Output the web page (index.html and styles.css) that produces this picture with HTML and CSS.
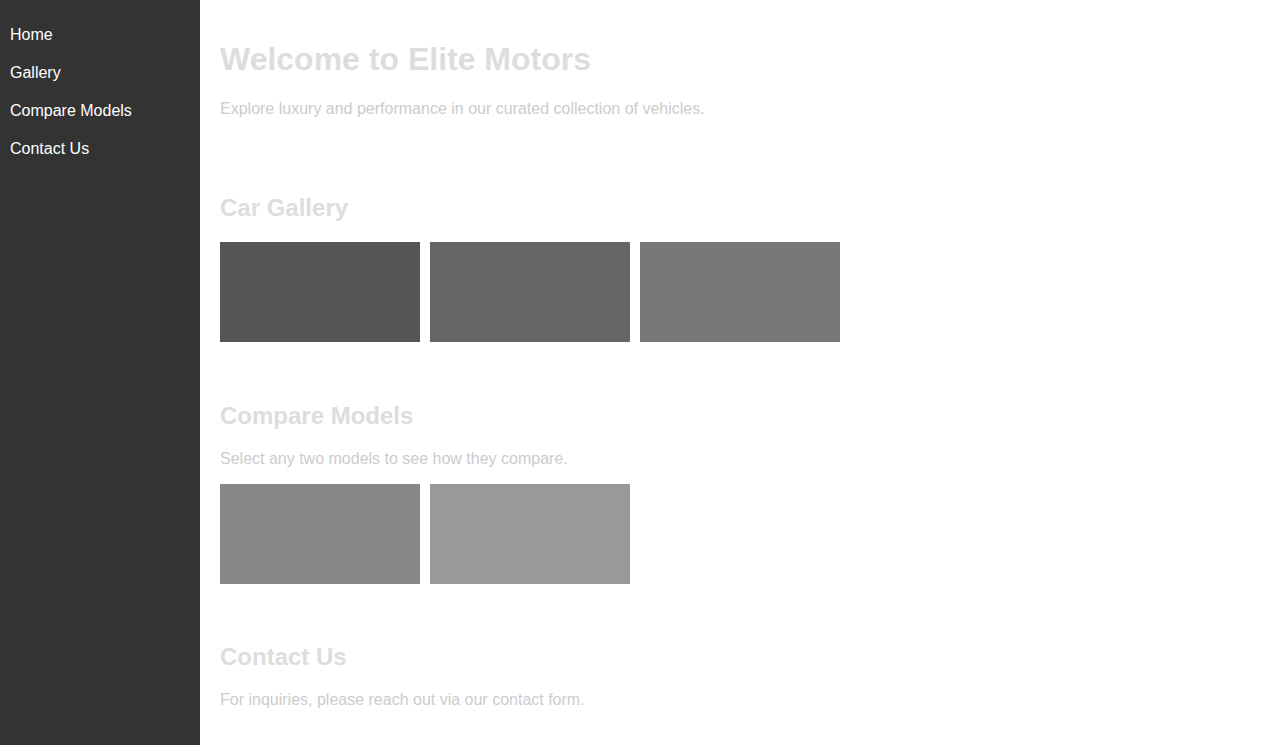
FILE: index.html
```html
<!DOCTYPE html>
<html lang="en">
<head>
<meta charset="utf-8">
<title>Elite Motors</title>
<link rel="stylesheet" href="styles.css">
</head>
<body>
<nav class="sidebar">
  <a href="#home" class="nav-link">Home</a>
  <a href="#gallery" class="nav-link">Gallery</a>
  <a href="#compare" class="nav-link">Compare Models</a>
  <a href="#contact" class="nav-link">Contact Us</a>
</nav>
<main class="main">
  <section class="section" id="home">
    <h1 class="title">Welcome to Elite Motors</h1>
    <p class="text">Explore luxury and performance in our curated collection of vehicles.</p>
  </section>
  <section class="section" id="gallery">
    <h2 class="heading">Car Gallery</h2>
    <div class="tiles">
      <div class="tile tile-1"></div>
      <div class="tile tile-2"></div>
      <div class="tile tile-3"></div>
    </div>
  </section>
  <section class="section" id="compare">
    <h2 class="heading">Compare Models</h2>
    <p class="text">Select any two models to see how they compare.</p>
    <div class="tiles">
      <div class="tile tile-4"></div>
      <div class="tile tile-5"></div>
    </div>
  </section>
  <section class="section" id="contact">
    <h2 class="heading">Contact Us</h2>
    <p class="text">For inquiries, please reach out via our contact form.</p>
  </section>
</main>
</body>
</html>
```
FILE: styles.css
```css
html, body {
  margin: 0;
  padding: 0;
  background: #fff;
  font-family: "Liberation Sans", Arial, sans-serif;
}

.sidebar {
  position: fixed;
  top: 0;
  left: 0;
  bottom: 0;
  width: 200px;
  background: #333;
  padding: 16px 0;
  box-sizing: border-box;
  display: flex;
  flex-direction: column;
}

.nav-link {
  display: block;
  padding: 10px;
  color: #fff;
  text-decoration: none;
  font-size: 16px;
  line-height: 18px;
}

.main {
  margin-left: 200px;
}

.section {
  padding: 20px;
}

.title {
  font-size: 32px;
  margin: 21.44px 0;
  color: #ddd;
}

.heading {
  font-size: 24px;
  margin: 19.92px 0;
  color: #ddd;
}

.text {
  font-size: 16px;
  margin: 16px 0;
  color: #ccc;
}

.tiles {
  display: flex;
  gap: 10px;
}

.tile {
  width: 200px;
  height: 100px;
}

.tile-1 { background: #555; }
.tile-2 { background: #666; }
.tile-3 { background: #777; }
.tile-4 { background: #888; }
.tile-5 { background: #999; }
```
